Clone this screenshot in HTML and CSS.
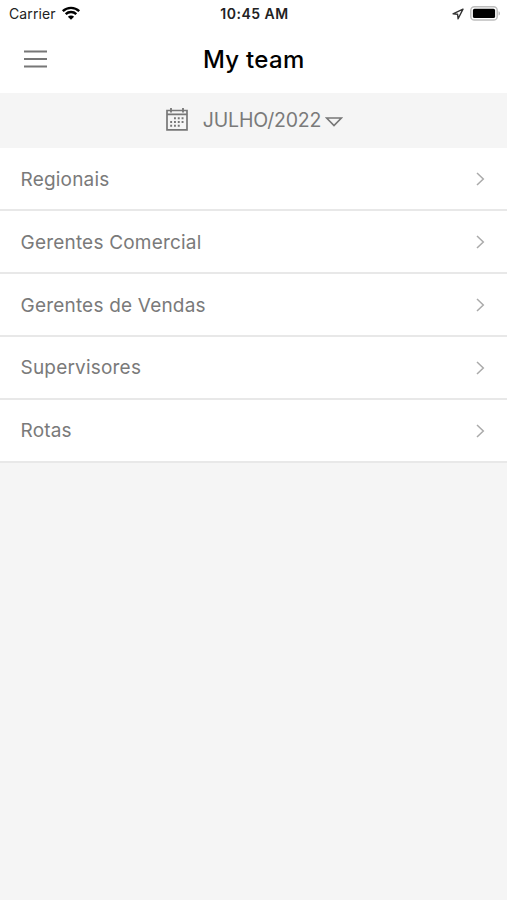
FILE: index.html
```html
<!DOCTYPE html>
<html lang="pt">
  <head>
    <meta charset="UTF-8">
    <meta name="viewport" content="width=device-width, initial-scale=1">
    <title>My team</title>
    <link rel="stylesheet" href="styles.css">
  </head>

  <body>
    <div class="status">
      <div class="status-left">
        <span class="carrier">Carrier</span>
        <svg class="wifi" width="20" height="16" viewBox="0 0 20 16">
          <path d="M1.8 6.2a11.8 11.8 0 0 1 16.4 0M4.7 9.2a7.6 7.6 0 0 1 10.6 0" fill="none" stroke="#000" stroke-width="2.4"/>
          <path d="M6.9 11.7a4.4 4.4 0 0 1 6.2 0L10 14.8z"/>
        </svg>
      </div>
      <div class="time">10:45 AM</div>
      <div class="status-right">
        <svg width="12" height="12" viewBox="0 0 12 12">
          <path d="M11 1.1L1 5.8l4.6.5.5 4.5z" fill="none" stroke="#333" stroke-width="1.4" stroke-linejoin="round"/>
        </svg>
        <svg class="battery" width="31" height="15" viewBox="0 0 31 15">
          <rect x=".8" y=".8" width="26.4" height="13.2" rx="3.6" fill="#fff" stroke="#bdbdbd" stroke-width="1.5"/>
          <rect x="2.9" y="2.8" width="22.2" height="9.2" rx="1.6"/>
          <path d="M28.6 5.2c1.6.6 1.6 3.8 0 4.4z" fill="#aaa"/>
        </svg>
      </div>
    </div>

    <div class="header">
      <svg class="menu" width="24" height="18" viewBox="0 0 24 18">
        <path d="M0 1.5h23M0 9h23M0 16.5h23" stroke="#777" stroke-width="1.8"/>
      </svg>
      <h1 class="title">My team</h1>
    </div>

    <div class="month">
      <svg class="calendar" width="22" height="23" viewBox="0 0 22 23">
        <path d="M1 2.5h20v19.3H1zM1 6.4h20" fill="none" stroke="#777" stroke-width="1.7"/>
        <path d="M5 0v4.6M17 0v4.6" stroke="#777" stroke-width="1.8"/>
        <path d="M8 10.2h10.5M4.2 14h14.3M4.2 17.8h10.5" stroke="#777" stroke-width="1.9" stroke-dasharray="1.9 1.9"/>
      </svg>
      <span class="month-name">JULHO/2022</span>
      <svg class="arrow" width="18" height="10" viewBox="0 0 18 10">
        <path d="M1.6 1h14.8L9 8.6z" fill="none" stroke="#777" stroke-width="1.7"/>
      </svg>
    </div>

    <ul class="list">
      <li class="row"><span class="label">Regionais</span><svg class="chevron" width="9" height="14" viewBox="0 0 9 14"><path d="M1 1l6.3 6L1 13"/></svg></li>
      <li class="row"><span class="label">Gerentes Comercial</span><svg class="chevron" width="9" height="14" viewBox="0 0 9 14"><path d="M1 1l6.3 6L1 13"/></svg></li>
      <li class="row"><span class="label">Gerentes de Vendas</span><svg class="chevron" width="9" height="14" viewBox="0 0 9 14"><path d="M1 1l6.3 6L1 13"/></svg></li>
      <li class="row"><span class="label">Supervisores</span><svg class="chevron" width="9" height="14" viewBox="0 0 9 14"><path d="M1 1l6.3 6L1 13"/></svg></li>
      <li class="row"><span class="label">Rotas</span><svg class="chevron" width="9" height="14" viewBox="0 0 9 14"><path d="M1 1l6.3 6L1 13"/></svg></li>
    </ul>
  </body>
</html>
```
FILE: styles.css
```css
* {
  box-sizing: border-box;
}

body {
  margin: 0;
  min-height: 900px;
  background-color: #f5f5f5;
  color: #7a7a7a;
  font-family: Inter, "Liberation Sans", sans-serif;
}

svg {
  display: block;
  flex: none;
}

.status {
  display: grid;
  grid-template-columns: 1fr auto 1fr;
  align-items: center;
  height: 27px;
  padding: 0 7px 0 9px;
  background-color: #fff;
  color: #222;
  font-size: 14px;
}

.status-left,
.status-right {
  display: flex;
  align-items: center;
}

.status-left {
  gap: 5px;
}

.status-right {
  justify-content: flex-end;
  gap: 6px;
  margin-right: -1px;
}

.carrier {
  letter-spacing: 0.1px;
}

.wifi {
  margin-top: -2px;
}

.time {
  font-weight: 600;
  letter-spacing: 0.5px;
}

.header {
  display: grid;
  grid-template-columns: 1fr auto 1fr;
  align-items: center;
  height: 66px;
  padding: 0 25px 0 23.5px;
  background-color: #fff;
}

.menu {
  margin-top: -3px;
}

.title {
  margin: 0 -1px 0 1px;
  color: #000;
  font-size: 24px;
  font-weight: 450;
  letter-spacing: 0.3px;
  line-height: 30px;
}

.month {
  display: flex;
  align-items: center;
  justify-content: center;
  height: 55px;
  padding: 0 0 2px 2px;
}

.month-name {
  margin: 0 4px 0 15px;
  font-size: 19.5px;
  letter-spacing: -0.2px;
}

.arrow {
  margin-top: 4px;
}

.list {
  margin: 0;
  padding: 0;
  list-style: none;
}

.row {
  display: flex;
  align-items: center;
  justify-content: space-between;
  height: 62.8px;
  padding: 1px 22.5px 0 20.5px;
  border-bottom: 2px solid #e8e8e8;
  background-color: #fff;
}

.row:first-child {
  height: 63.4px;
}

.label {
  font-size: 19px;
  letter-spacing: 0.2px;
}

.chevron {
  fill: none;
  stroke: #aaa;
  stroke-width: 1.5;
}
```
